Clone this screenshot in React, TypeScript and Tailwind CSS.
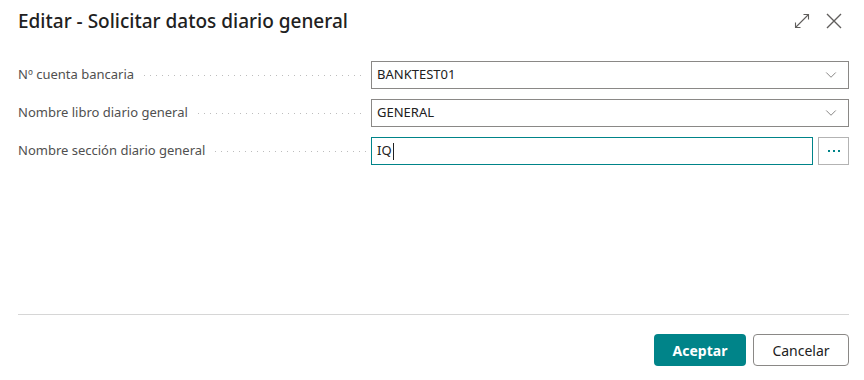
import { ChevronDown } from 'lucide-react';

const font = { fontFamily: '"Noto Sans", "Open Sans", sans-serif' };

function Leader() {
  return (
    <div className="flex-1 h-px ml-[10px] mr-[5px] bg-[linear-gradient(to_right,#bdbdbd_1px,transparent_1px)] bg-[length:6px_1px] bg-repeat-x" />
  );
}

function Row({ label, children }: { label: string; children: React.ReactNode }) {
  return (
    <div className="flex items-center h-[28px]">
      <div className="w-[353px] flex items-center">
        <span className="text-[13px] text-[#505050] whitespace-nowrap">{label}</span>
        <Leader />
      </div>
      {children}
    </div>
  );
}

export default function App() {
  return (
    <div className="w-[864px] h-[380px] bg-white flex flex-col text-[#212121]" style={font}>
      {/* Header */}
      <header className="h-[42px] pl-[18px] pr-[22px] flex items-center justify-between">
        <h1 className="text-[19px] font-medium text-[#212121]">Editar - Solicitar datos diario general</h1>
        <div className="flex items-center gap-[16px]">
          <svg width="16" height="16" viewBox="0 0 16 16" fill="none" stroke="#605e5c" strokeWidth="1.1">
            <path d="M1.5 14.5 L14.5 1.5" />
            <path d="M9.5 1.5 H14.5 V6.5" />
            <path d="M1.5 9.5 V14.5 H6.5" />
          </svg>
          <svg width="16" height="16" viewBox="0 0 16 16" fill="none" stroke="#605e5c" strokeWidth="1.4">
            <path d="M1 1 L15 15 M15 1 L1 15" />
          </svg>
        </div>
      </header>

      {/* Body */}
      <main className="flex-1 pl-[18px] pr-[15px] pt-[19px] flex flex-col gap-[10px]">
        <Row label="Nº cuenta bancaria">
          <div className="flex-1 h-[28px] border border-[#8a8886] flex items-center justify-between pl-[5px] pr-[8px]">
            <span className="text-[13px]">BANKTEST01</span>
            <ChevronDown size={18} strokeWidth={1} color="#605e5c" />
          </div>
        </Row>
        <Row label="Nombre libro diario general">
          <div className="flex-1 h-[28px] border border-[#8a8886] flex items-center justify-between pl-[5px] pr-[8px]">
            <span className="text-[13px]">GENERAL</span>
            <ChevronDown size={18} strokeWidth={1} color="#605e5c" />
          </div>
        </Row>
        <Row label="Nombre sección diario general">
          <div className="flex-1 flex gap-[5px]">
            <div className="flex-1 h-[28px] border border-[#008489] flex items-center pl-[5px]">
              <span className="text-[13px]">IQ</span>
              <span className="w-px h-[17px] bg-[#212121] ml-[1px]" />
            </div>
            <button className="w-[31px] h-[28px] border border-[#b3b3b3] flex items-center justify-center gap-[3px]">
              <span className="w-[2px] h-[2px] bg-[#008489]" />
              <span className="w-[2px] h-[2px] bg-[#008489]" />
              <span className="w-[2px] h-[2px] bg-[#008489]" />
            </button>
          </div>
        </Row>
      </main>

      {/* Footer */}
      <footer className="ml-[18px] mr-[15px] border-t border-[#d6d6d6] pt-[19px] pb-[14px] flex justify-end gap-[7px]">
        <button className="w-[92px] h-[32px] rounded-[4px] bg-[#008489] text-white text-[14px] font-bold">
          Aceptar
        </button>
        <button className="w-[96px] h-[32px] rounded-[4px] border border-[#8a8886] bg-white text-[#212121] text-[14px]">
          Cancelar
        </button>
      </footer>
    </div>
  );
}
